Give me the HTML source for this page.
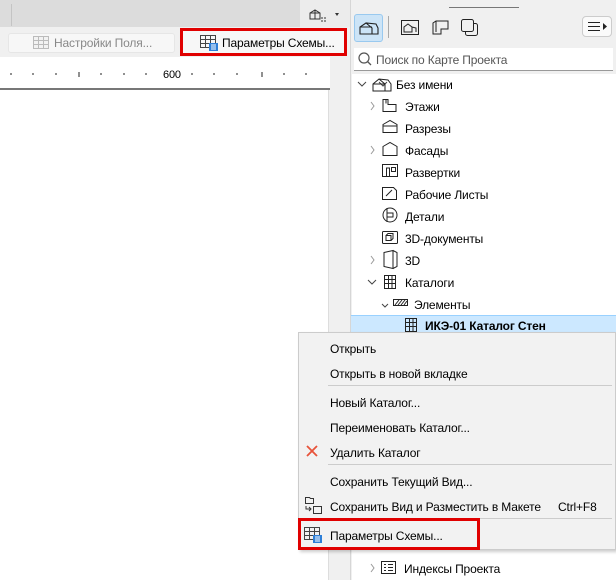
<!DOCTYPE html>
<html><head><meta charset="utf-8"><style>
*{box-sizing:border-box;margin:0;padding:0}
body{width:616px;height:580px;overflow:hidden;background:#f0f0f0;font-family:"Liberation Sans","Noto Sans CJK SC",sans-serif;font-size:12px;color:#000;position:relative;letter-spacing:-0.15px}
.a{position:absolute}
.t{position:absolute;white-space:nowrap;font-size:12px}
.ti{position:absolute;white-space:nowrap;font-size:12px}
svg{position:absolute;overflow:visible}
</style></head><body>
<div class="a" style="left:0;top:0;width:350px;height:27px;background:#dcdcdc"></div>
<div class="a" style="left:11px;top:4px;width:1px;height:22px;background:#c4c4c4"></div>
<div class="a" style="left:300px;top:0;width:50px;height:27px;background:#ececec"></div>
<svg style="left:309px;top:9px" width="30" height="14"><path d="M1 10V4L6 1L11 4V10Z M6 1V10 M1 4H11" fill="none" stroke="#333" stroke-width="1"/><path d="M12 9h2M12 12h2M15 9h2M15 12h2" stroke="#333"/><path d="M26 4l4 0l-2 3z" fill="#333"/></svg>
<div class="a" style="left:0;top:27px;width:350px;height:30px;background:#f0f0f0"></div>
<div class="a" style="left:8px;top:33px;width:167px;height:20px;background:#f7f7f7;border:1px solid #e6e6e6;border-radius:3px"></div>
<svg style="left:33px;top:36px" width="16" height="13"><rect x="0.5" y="0.5" width="15" height="12" fill="#f2f2f2" stroke="#bbb"/><path d="M0 4.5H16M0 8.5H16M5.5 0V13M10.5 0V13" stroke="#bbb"/></svg>
<div class="t" style="left:54px;top:36px;color:#888">Настройки Поля...</div>
<div class="a" style="left:180px;top:28px;width:167px;height:28px;border:3px solid #e00000;background:#f7f7f7"></div>
<svg style="left:200px;top:35px" width="18" height="16"><rect x="0.5" y="0.5" width="15" height="12" fill="none" stroke="#444"/><path d="M0 4.5H16M0 8.5H16M5.5 0V13M10.5 0V13" stroke="#444"/><rect x="9" y="8" width="9" height="8" fill="#2d7fd8"/><path d="M11 10h5M11 12h5M11 14h5" stroke="#fff" stroke-width="1"/></svg>
<div class="t" style="left:222px;top:36px">Параметры Схемы...</div>
<div class="a" style="left:0;top:57px;width:330px;height:31px;background:#fff"></div>
<svg style="left:0;top:70px" width="330" height="10"><g stroke="#222" stroke-width="1"><path d="M11 3v2M33 3v2M56 3v2M79 2v5M101 3v2M124 3v2M146 3v2M192 3v2M214 3v2M237 3v2M262 2v5M284 3v2M306 3v2"/></g></svg>
<div class="t" style="left:163px;top:69px;font-size:11px">600</div>
<div class="a" style="left:0;top:88px;width:330px;height:2px;background:#777"></div>
<div class="a" style="left:0;top:90px;width:328px;height:490px;background:#fff"></div>
<div class="a" style="left:328px;top:90px;width:1px;height:490px;background:#ddd"></div>
<div class="a" style="left:350px;top:0;width:266px;height:580px;background:#f0f0f0;border-left:1px solid #d6d6d6"></div>
<div class="a" style="left:449px;top:7px;width:70px;height:1px;background:#777"></div>
<div class="a" style="left:354px;top:14px;width:29px;height:28px;background:#cce4f7;border:1px solid #99c9ef;border-radius:3px"></div>
<svg style="left:359px;top:21px" width="20" height="14"><path d="M1 13V6L7 2L17 3L19 7V13Z M7 2L13 7V13 M1 6H13" fill="none" stroke="#222" stroke-width="1.1"/></svg>
<div class="a" style="left:388px;top:16px;width:1px;height:22px;background:#aaa"></div>
<svg style="left:401px;top:20px" width="18" height="15"><rect x="0.5" y="0.5" width="17" height="14" fill="none" stroke="#222"/><path d="M3 12V7L7 4L11 7V12Z M11 7L15 8V12" fill="none" stroke="#222"/></svg>
<svg style="left:431px;top:20px" width="18" height="15"><path d="M2 14V3L5 1H17V9H10V14Z M5 1V12" fill="none" stroke="#222"/></svg>
<svg style="left:461px;top:19px" width="18" height="17"><rect x="4.5" y="4.5" width="12" height="12" rx="2" fill="none" stroke="#222"/><rect x="0.5" y="0.5" width="12" height="12" rx="2" fill="#f0f0f0" stroke="#222"/></svg>
<div class="a" style="left:582px;top:16px;width:30px;height:21px;background:#fafafa;border:1px solid #ccc;border-radius:4px"></div>
<svg style="left:588px;top:22px" width="20" height="10"><path d="M0 .5h12M0 4.5h12M0 8.5h12" stroke="#222"/><path d="M15 1l4 3.5l-4 3.5z" fill="#222"/></svg>
<div class="a" style="left:354px;top:48px;width:259px;height:23px;background:#fff;border-bottom:1px solid #999"></div>
<svg style="left:358px;top:52px" width="14" height="14"><circle cx="6" cy="6" r="5" fill="none" stroke="#555" stroke-width="1.2"/><path d="M9.5 9.5L13 13" stroke="#555" stroke-width="1.3"/></svg>
<div class="t" style="left:376px;top:53px;color:#555">Поиск по Карте Проекта</div>
<div class="a" style="left:352px;top:74px;width:264px;height:506px;background:#fff"></div>
<svg style="left:0;top:0" width="616" height="580"><g fill="none" stroke="#444" stroke-width="1">
<path d="M358 82l4 4l4-4M379 82l4 4l4-4M382 304l3 3l3-3"/>
<path d="M371 102l3 4l-3 4M371 146l3 4l-3 4M371 256l3 4l-3 4M371 564l3 4l-3 4" stroke="#999"/>
<path d="M368 280l4 4l4-4" stroke="#444"/>
</g>
<g fill="none" stroke="#222" stroke-width="1">
<path d="M373 91V84L379 79L388 80L391 84V91Z M379 79L385 84V91 M373 84H385"/>
<path d="M383 99.5h5v5h8v7h-13z M386 99.5v4"/>
<path d="M383 124.5l7-4l7 4v8h-14z M383 126h14"/>
<path d="M383 146.5l7-4l7 4v9h-14z"/>
<rect x="382.5" y="164.5" width="15" height="12"/><path d="M386.5 176V168h3v8 M391.5 167.5h4v4h-4z"/>
<path d="M382.5 187.5h11l3 3v9h-14z M386 196l6-6"/>
<circle cx="390" cy="215" r="7"/><path d="M387 208v14 M387 213h6v4h-6"/>
<rect x="382.5" y="231.5" width="15" height="12" rx="1"/><path d="M386 235.5h5v5h-5z M386 235.5l2-2h5v5l-2 2"/>
<path d="M384 252.5l9-2v18l-9-2z M393 250.5l4 2v14l-4 2"/>
<rect x="384.5" y="275.5" width="11" height="13"/><path d="M388.5 276v13M392 276v13M385 279.5h11M385 283.5h11"/>
<rect x="393.5" y="299.5" width="14" height="6"/><path d="M395 305l4-5M398 305l4-5M401 305l4-5M404 305l3-4"/>
<rect x="381.5" y="561.5" width="14" height="12"/><path d="M384 564.5h2M384 567.5h2M384 570.5h2M388 564.5h5M388 567.5h5M388 570.5h5"/>
</g></svg>
<div class="ti" style="left:396px;top:78px">Без имени</div>
<div class="ti" style="left:405px;top:100px">Этажи</div>
<div class="ti" style="left:405px;top:122px">Разрезы</div>
<div class="ti" style="left:405px;top:144px">Фасады</div>
<div class="ti" style="left:405px;top:166px">Развертки</div>
<div class="ti" style="left:405px;top:188px">Рабочие Листы</div>
<div class="ti" style="left:405px;top:210px">Детали</div>
<div class="ti" style="left:405px;top:232px">3D-документы</div>
<div class="ti" style="left:405px;top:254px">3D</div>
<div class="ti" style="left:405px;top:276px">Каталоги</div>
<div class="ti" style="left:414px;top:298px">Элементы</div>
<div class="a" style="left:351px;top:315px;width:265px;height:17px;background:#cce8ff;border-top:1px solid #99d1ff"></div>
<svg style="left:0;top:0" width="616" height="580"><g fill="none" stroke="#222"><rect x="405.5" y="318.5" width="11" height="13"/><path d="M409.5 319v13M413 319v13M406 322.5h11M406 326.5h11"/></g></svg>
<div class="ti" style="left:425px;top:319px;font-weight:bold">ИКЭ-01 Каталог Стен</div>
<div class="ti" style="left:404px;top:562px">Индексы Проекта</div>
<div class="a" style="left:298px;top:332px;width:318px;height:218px;background:#f2f2f2;border:1px solid #ccc;box-shadow:2px 2px 3px rgba(0,0,0,.2)"></div>
<div class="t" style="left:330px;top:342px">Открыть</div>
<div class="t" style="left:330px;top:367px">Открыть в новой вкладке</div>
<div class="a" style="left:328px;top:385px;width:284px;height:1px;background:#ccc"></div>
<div class="t" style="left:330px;top:396px">Новый Каталог...</div>
<div class="t" style="left:330px;top:421px">Переименовать Каталог...</div>
<svg style="left:306px;top:445px" width="12" height="12"><path d="M1 1L11 11M11 1L1 11" stroke="#e8533a" stroke-width="1.8"/></svg>
<div class="t" style="left:330px;top:446px">Удалить Каталог</div>
<div class="a" style="left:328px;top:464px;width:284px;height:1px;background:#ccc"></div>
<div class="t" style="left:330px;top:475px">Сохранить Текущий Вид...</div>
<svg style="left:304px;top:496px" width="18" height="18"><g fill="none" stroke="#333"><path d="M1.5 1.5h4l1 1h3v5h-8z"/><rect x="9.5" y="10.5" width="8" height="7"/><path d="M2 10v3h5M5 11l2 2l-2 2"/></g></svg>
<div class="t" style="left:330px;top:500px">Сохранить Вид и Разместить в Макете</div>
<div class="t" style="left:558px;top:500px">Ctrl+F8</div>
<div class="a" style="left:328px;top:518px;width:284px;height:1px;background:#ccc"></div>
<div class="a" style="left:298px;top:518px;width:182px;height:32px;border:3px solid #e00000"></div>
<svg style="left:304px;top:527px" width="18" height="16"><rect x="0.5" y="0.5" width="15" height="12" fill="none" stroke="#444"/><path d="M0 4.5H16M0 8.5H16M5.5 0V13M10.5 0V13" stroke="#444"/><rect x="9" y="8" width="9" height="8" fill="#2d7fd8"/><path d="M11 10h5M11 12h5M11 14h5" stroke="#fff"/></svg>
<div class="t" style="left:330px;top:529px">Параметры Схемы...</div>
</body></html>
